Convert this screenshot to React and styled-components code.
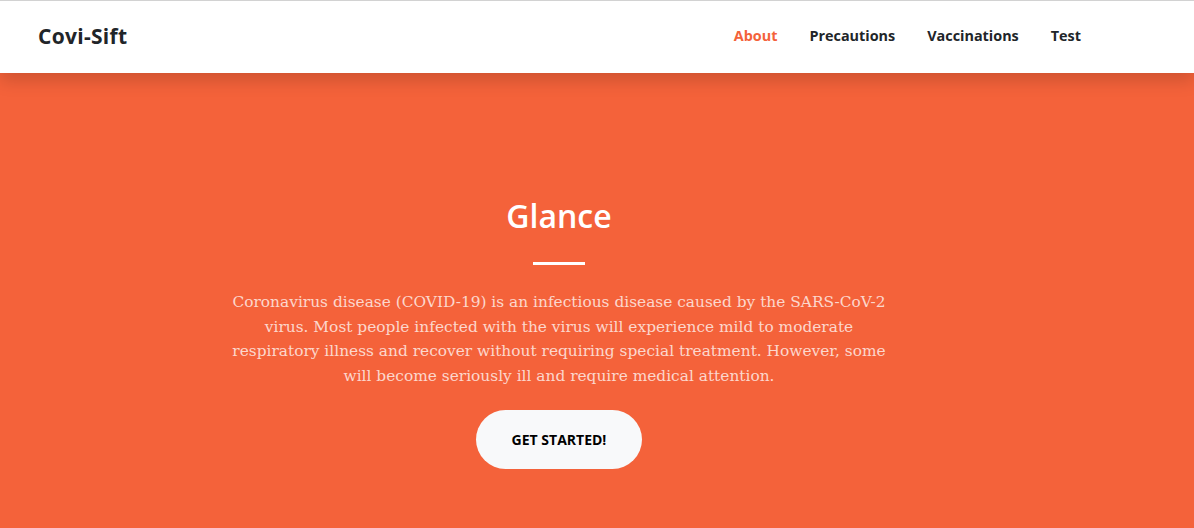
import React from 'react';
import styled, { createGlobalStyle } from 'styled-components';

const GlobalStyle = createGlobalStyle`
  html, body {
    margin: 0;
    padding: 0;
    background-color: #f4623a;
  }
  body {
    font-family: 'DejaVu Serif', 'Liberation Serif', serif;
  }
  * {
    box-sizing: border-box;
  }
`;

const Page = styled.div`
  width: 100%;
  height: 528px;
  overflow: hidden;
  display: flex;
  flex-direction: column;
  border-top: 1px solid #d2d2d2;
`;

const Navbar = styled.header`
  height: 72px;
  background-color: #fff;
  box-shadow: 0 0.5rem 1rem rgba(0, 0, 0, 0.15);
  display: flex;
  align-items: center;
  padding: 0 97px 3px 38px;
  position: relative;
  z-index: 10;
  font-family: 'Open Sans', 'Noto Sans', sans-serif;
`;

const Brand = styled.a`
  font-size: 21px;
  font-weight: 700;
  color: #212529;
  text-decoration: none;
  letter-spacing: 0.3px;
`;

const NavList = styled.ul`
  list-style: none;
  display: flex;
  margin: 0 0 0 auto;
  padding: 0;
`;

const NavItem = styled.li``;

const NavLink = styled.a`
  display: block;
  padding: 0 16px;
  font-size: 14.4px;
  font-weight: 700;
  color: ${(p) => (p.$active ? '#f4623a' : '#212529')};
  text-decoration: none;
`;

const Hero = styled.section`
  flex: 1;
  display: flex;
  flex-direction: column;
  align-items: center;
  padding: 124px 76px 0 0;
`;

const Title = styled.h1`
  margin: 0;
  font-family: 'Open Sans', 'Noto Sans', sans-serif;
  font-size: 32px;
  font-weight: 600;
  color: #fff;
  line-height: 1.2;
`;

const Divider = styled.hr`
  width: 52px;
  height: 3px;
  margin: 27px 0 25px;
  border: 0;
  background-color: #fff;
  opacity: 1;
`;

const Lead = styled.p`
  margin: 0 0 22px;
  max-width: 664px;
  text-align: center;
  font-size: 15.4px;
  line-height: 24.4px;
  color: rgba(255, 255, 255, 0.75);
`;

const Button = styled.a`
  display: inline-flex;
  align-items: center;
  justify-content: center;
  width: 166px;
  height: 59px;
  border-radius: 10rem;
  background-color: #f8f9fa;
  color: #000;
  text-decoration: none;
  text-transform: uppercase;
  font-family: 'Open Sans', 'Noto Sans', sans-serif;
  font-size: 14px;
  font-weight: 700;
`;

const links = [
  { label: 'About', active: true },
  { label: 'Precautions' },
  { label: 'Vaccinations' },
  { label: 'Test' },
];

const App = () => {
  return (
    <>
      <GlobalStyle />
      <Page>
        <Navbar>
          <Brand href="#">Covi-Sift</Brand>
          <NavList>
            {links.map((l) => (
              <NavItem key={l.label}>
                <NavLink href="#" $active={l.active}>
                  {l.label}
                </NavLink>
              </NavItem>
            ))}
          </NavList>
        </Navbar>
        <Hero>
          <Title>Glance</Title>
          <Divider />
          <Lead>
            Coronavirus disease (COVID-19) is an infectious disease caused by the SARS-CoV-2
            virus. Most people infected with the virus will experience mild to moderate
            respiratory illness and recover without requiring special treatment. However, some
            will become seriously ill and require medical attention.
          </Lead>
          <Button href="#">Get Started!</Button>
        </Hero>
      </Page>
    </>
  );
};

export default App;
